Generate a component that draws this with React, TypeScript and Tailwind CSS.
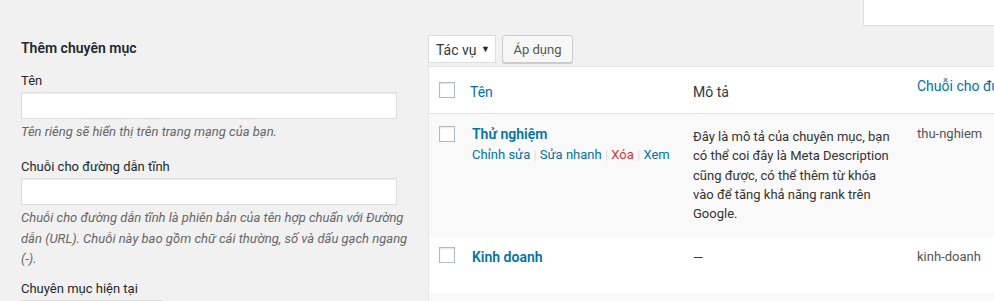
import React from "react";

const font = { fontFamily: 'Roboto, "Noto Sans", "Liberation Sans", sans-serif' };

function Checkbox() {
  return <div className="w-[16px] h-[16px] border border-[#b4b9be] bg-white shadow-[inset_0_1px_2px_rgba(0,0,0,0.1)]" />;
}

export default function App() {
  return (
    <div className="w-[994px] h-[301px] overflow-hidden bg-[#f1f1f1] text-[13px] text-[#444]" style={font}>
      {/* top bar with search box */}
      <div className="flex justify-end h-[26px]">
        <div className="w-[131px] h-[26px] bg-white border-l border-b border-[#ddd]" />
      </div>

      <div className="flex">
        {/* left column */}
        <div className="w-[428px] shrink-0 pl-[21px] pt-[12px]">
          <h2 className="text-[14px] leading-[20px] font-semibold text-[#23282d]">Thêm chuyên mục</h2>
          <div className="mt-[14px] leading-[18px] text-[#23282d]">Tên</div>
          <div className="mt-[2px] w-[376px] h-[27px] bg-white border border-[#ddd] shadow-[inset_0_1px_2px_rgba(0,0,0,0.07)]" />
          <p className="mt-[3px] leading-[20px] italic text-[#666]">Tên riêng sẽ hiển thị trên trang mạng của bạn.</p>
          <div className="mt-[16px] leading-[18px] text-[#23282d]">Chuỗi cho đường dẫn tĩnh</div>
          <div className="mt-[2px] w-[376px] h-[27px] bg-white border border-[#ddd] shadow-[inset_0_1px_2px_rgba(0,0,0,0.07)]" />
          <p className="mt-[3px] leading-[20.5px] italic text-[#666] whitespace-nowrap">
            Chuỗi cho đường dẫn tĩnh là phiên bản của tên hợp chuẩn với Đường
            <br />
            dẫn (URL). Chuỗi này bao gồm chữ cái thường, số và dấu gạch ngang
            <br />
            (-).
          </p>
          <div className="mt-[10px] leading-[18px] text-[#23282d]">Chuyên mục hiện tại</div>
          <div className="mt-[2px] w-[141px] h-[28px] bg-white border border-[#ddd]" />
        </div>

        {/* right column */}
        <div className="flex-1 pt-[9px] min-w-0">
          <div className="flex items-start gap-[6px] h-[28px]">
            <div className="w-[68px] h-[28px] bg-white border border-[#ddd] flex items-center pl-[7px] pr-[5px] pt-[2px] text-[14px] text-[#32373c]">
              <span className="flex-1">Tác vụ</span>
              <span className="text-[9px] text-[#222]">▼</span>
            </div>
            <div className="w-[71px] h-[28px] bg-[#f7f7f7] border border-[#ccc] rounded-[3px] shadow-[0_1px_0_#ccc] flex items-center justify-center pt-[1px] text-[13px] text-[#555]">
              Áp dụng
            </div>
          </div>

          <div className="mt-[3px] w-[700px] border border-[#e5e5e5] bg-white">
            {/* header */}
            <div className="flex h-[47px] border-b border-[#e1e1e1]">
              <div className="w-[33px] pl-[10px] flex items-center">
                <Checkbox />
              </div>
              <div className="w-[221px] pl-[8px] pt-[4px] flex items-center text-[14px] text-[#0073aa]">Tên</div>
              <div className="w-[224px] pl-[10px] pt-[4px] flex items-center text-[14px] text-[#32373c]">Mô tả</div>
              <div className="flex-1 pl-[10px] pt-[10px] leading-[18px] text-[14px] text-[#0073aa] whitespace-nowrap">Chuỗi cho đường dẫn tĩnh</div>
            </div>

            {/* row 1 */}
            <div className="flex h-[123px] bg-[#f9f9f9]">
              <div className="w-[33px] pl-[10px] pt-[12px]">
                <Checkbox />
              </div>
              <div className="w-[221px] pl-[10px] pt-[11px]">
                <div className="text-[14px] leading-[18px] font-semibold text-[#0073aa]">Thử nghiệm</div>
                <div className="mt-[2px] leading-[20px] whitespace-nowrap">
                  <span className="text-[#0073aa]">Chỉnh sửa</span>
                  <span className="text-[#ddd]"> | </span>
                  <span className="text-[#0073aa]">Sửa nhanh</span>
                  <span className="text-[#ddd]"> | </span>
                  <span className="text-[#dc3232]">Xóa</span>
                  <span className="text-[#ddd]"> | </span>
                  <span className="text-[#0073aa]">Xem</span>
                </div>
              </div>
              <div className="w-[224px] pl-[10px] pt-[13px] leading-[19.25px] text-[#333] whitespace-nowrap">
                Đây là mô tả của chuyên mục, bạn
                <br />
                có thể coi đây là Meta Description
                <br />
                cũng được, có thể thêm từ khóa
                <br />
                vào để tăng khả năng rank trên
                <br />
                Google.
              </div>
              <div className="flex-1 pl-[10px] pt-[11px] leading-[18px] text-[#555]">thu-nghiem</div>
            </div>

            {/* row 2 */}
            <div className="flex h-[56px] bg-white">
              <div className="w-[33px] pl-[10px] pt-[10px]">
                <Checkbox />
              </div>
              <div className="w-[221px] pl-[10px] pt-[11px]">
                <div className="text-[14px] leading-[18px] font-semibold text-[#0073aa]">Kinh doanh</div>
              </div>
              <div className="w-[224px] pl-[10px] pt-[11px] leading-[19.5px] text-[#333]">—</div>
              <div className="flex-1 pl-[10px] pt-[11px] leading-[18px] text-[#555]">kinh-doanh</div>
            </div>

            {/* row 3 */}
            <div className="h-[40px] bg-[#f9f9f9]" />
          </div>
        </div>
      </div>
    </div>
  );
}
